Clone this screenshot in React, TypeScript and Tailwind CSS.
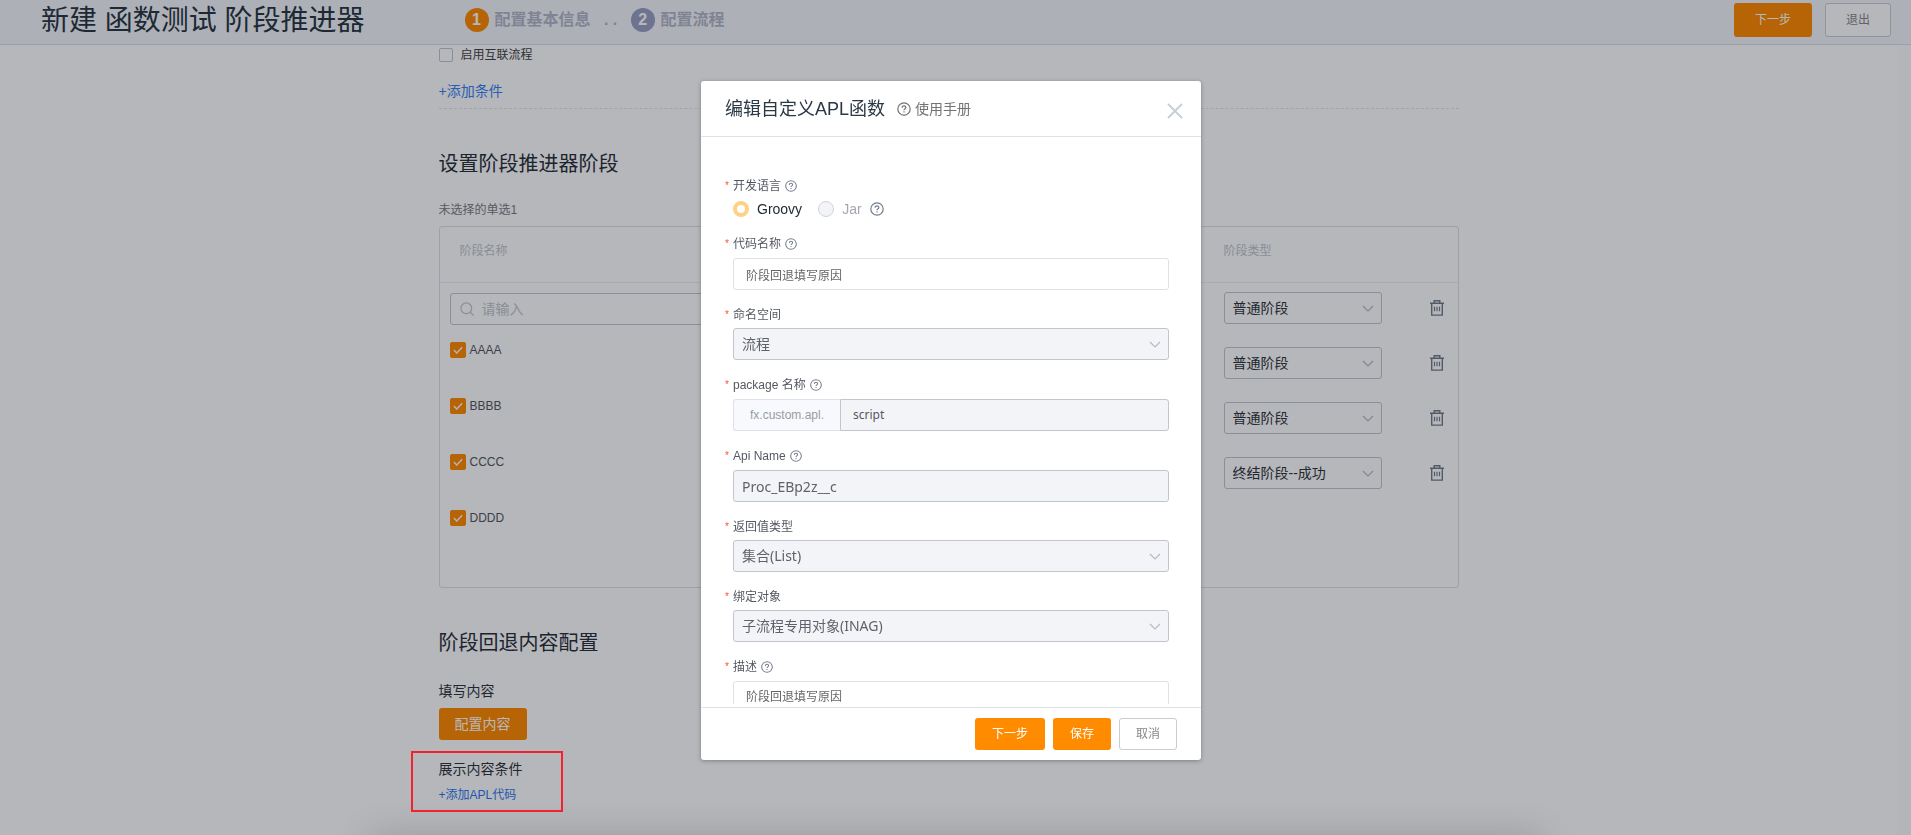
import { useState, type ReactNode } from 'react';

const stages = ['AAAA', 'BBBB', 'CCCC', 'DDDD'];
const stageTypes = ['普通阶段', '普通阶段', '普通阶段', '终结阶段--成功'];

const HelpIcon = ({ className }: { className: string }) => (
  <svg viewBox="0 0 14 14" fill="none" stroke="currentColor" strokeWidth="1.2" className={className} aria-hidden="true">
    <circle cx="7" cy="7" r="6.2" />
    <path d="M5.1 5.8c0-1.2.8-1.9 1.9-1.9s1.9.7 1.9 1.7c0 1.2-1.9 1.3-1.9 2.6M7 9.2v1.3" />
  </svg>
);

const Chevron = ({ className }: { className: string }) => (
  <svg viewBox="0 0 12 8" fill="none" stroke="currentColor" strokeWidth="1.2" className={className} aria-hidden="true">
    <path d="M1 2l5 5 5-5" />
  </svg>
);

const TrashIcon = () => (
  <svg viewBox="0 0 16 16" fill="none" stroke="currentColor" className="h-4 w-4" aria-hidden="true">
    <path strokeWidth="1.4" d="M1 3.2h14M2.7 3.2v11.9h10.6V3.2M5.2 3.2V.8h5.6v2.4" />
    <path strokeWidth="1.2" d="M5.5 6.8v4.4M8 6.8v4.4M10.5 6.8v4.4" />
  </svg>
);

interface FieldProps {
  id: string;
  label: string;
  help?: boolean;
  children: ReactNode;
}

const Field = ({ id, label, help, children }: FieldProps) => (
  <div>
    <div className={`mb-1 flex items-center text-xs text-[#545861] ${help ? 'h-[21px]' : 'h-5 pt-[2px]'}`}>
      <span className="w-2 text-[10px] text-[#ff522a]">*</span>
      <label htmlFor={id}>{label}</label>
      {help && <HelpIcon className="ml-1 h-3 w-3 text-[#737c8c]" />}
    </div>
    <div className="pl-2">{children}</div>
  </div>
);

const DisabledSelect = ({ id, value }: { id: string; value: string }) => (
  <div className="relative">
    <select
      id={id}
      disabled
      className="block h-8 w-full appearance-none rounded-[3px] border border-[#c1c5ce] bg-[#f2f4f7] pl-2 text-sm text-[#5f626b] disabled:opacity-100 font-['Noto_Sans','Noto_Sans_CJK_SC',sans-serif]"
    >
      <option>{value}</option>
    </select>
    <Chevron className="pointer-events-none absolute top-3 right-2 h-2 w-3 text-[#b5bac5]" />
  </div>
);

const StageRow = ({ name }: { name: string }) => {
  const [checked, setChecked] = useState(true);

  return (
    <label className="flex items-center text-xs text-[#545861]">
      <span className="relative h-4 w-4">
        <input
          type="checkbox"
          checked={checked}
          onChange={() => setChecked(!checked)}
          className="block h-4 w-4 appearance-none rounded-xs border border-[#c1c5ce] checked:border-[#ff8b00] checked:bg-[#ff8b00]"
        />
        <svg viewBox="0 0 16 16" fill="none" stroke="white" className="pointer-events-none absolute inset-0 h-4 w-4" aria-hidden="true">
          <path strokeWidth="1.3" d="M3.8 8l3 3 5.4-5.8" />
        </svg>
      </span>
      <span className="ml-1">{name}</span>
    </label>
  );
};

const StageTable = () => (
  <div className="mt-2 h-[362px] rounded-[3px] border border-[#dedfe3]">
    <div className="flex h-14 border-b border-[#eceef3] text-xs text-[#c1c5ce]">
      <div className="flex-1 pt-4 pl-5">阶段名称</div>
      <div className="w-[234px] pt-4">阶段类型</div>
    </div>
    <div className="flex">
      <div className="flex-1 pl-[10px] pt-[10px]">
        <label className="flex h-8 w-[400px] items-center rounded-[3px] border border-[#c1c5ce] pl-[9px] text-[#c1c5ce]">
          <svg viewBox="0 0 14 14" fill="none" stroke="currentColor" strokeWidth="1.2" className="h-[14px] w-[14px]" aria-hidden="true">
            <circle cx="6.3" cy="6.3" r="5.4" />
            <path d="M10.2 10.2l3.3 3.3" />
          </svg>
          <input
            aria-label="阶段名称"
            placeholder="请输入"
            className="ml-2 min-w-0 flex-1 text-sm outline-none placeholder:text-[#c1c5ce]"
          />
        </label>
        <div className="mt-[17px] flex flex-col gap-10">
          {stages.map((name) => (
            <StageRow key={name} name={name} />
          ))}
        </div>
      </div>
      <div className="flex w-[234px] flex-col gap-[23px] pt-[9px]">
        {stageTypes.map((type, i) => (
          <div key={i} className="flex items-center">
            <div className="relative w-[158px]">
              <select
                aria-label="阶段类型"
                className="block h-8 w-full appearance-none rounded-[3px] border border-[#c1c5ce] pl-2 text-sm text-[#2f3640]"
              >
                <option>{type}</option>
              </select>
              <Chevron className="pointer-events-none absolute top-3 right-2 h-2 w-3 text-[#b5bac5]" />
            </div>
            <button className="ml-[47px] text-[#737c8c]" aria-label="删除">
              <TrashIcon />
            </button>
          </div>
        ))}
      </div>
    </div>
  </div>
);

const Dialog = () => (
  <div className="fixed inset-0 z-10 flex justify-center bg-[rgba(2,8,16,0.29)] pt-[81px] pr-[9px] pb-[75px]">
    <div role="dialog" aria-labelledby="dialog-title" className="flex w-[500px] flex-col rounded-[3px] bg-white shadow-[0_1px_4px_rgba(0,0,0,0.3)]">
      <header className="flex h-14 shrink-0 items-center border-b border-[#dee1e8] pr-[18px] pl-6">
        <h2 id="dialog-title" className="text-lg text-[#2a3744]">编辑自定义APL函数</h2>
        <a href="#manual" className="ml-3 flex items-center gap-1 pt-px text-sm text-[#737373]">
          <HelpIcon className="h-[14px] w-[14px]" />
          使用手册
        </a>
        <button className="ml-auto pt-1 text-[#c6cedb]" aria-label="关闭">
          <svg viewBox="0 0 16 16" fill="none" stroke="currentColor" strokeWidth="1.9" className="h-4 w-4" aria-hidden="true">
            <path d="M1 1l14 14M15 1L1 15" />
          </svg>
        </button>
      </header>

      <form className="flex min-h-0 flex-1 flex-col gap-[14px] overflow-hidden pt-[38px] pr-8 pl-6">
        <Field id="lang-groovy" label="开发语言" help>
          <div className="flex h-[19px] items-center pb-[2px] text-sm">
            <input
              id="lang-groovy"
              type="radio"
              name="lang"
              defaultChecked
              className="h-4 w-4 appearance-none rounded-full border border-[#dee1e8] checked:border-4 checked:border-[#ffd088]"
            />
            <label htmlFor="lang-groovy" className="ml-2 text-[#212b36]">Groovy</label>
            <input
              id="lang-jar"
              type="radio"
              name="lang"
              disabled
              className="ml-4 h-4 w-4 appearance-none rounded-full border border-[#d0d4dc] bg-[#f2f4f7]"
            />
            <label htmlFor="lang-jar" className="ml-2 text-[#a3a8b3]">Jar</label>
            <HelpIcon className="ml-2 h-[14px] w-[14px] text-[#737c8c]" />
          </div>
        </Field>
        <Field id="code-name" label="代码名称" help>
          <input
            id="code-name"
            defaultValue="阶段回退填写原因"
            className="block h-8 w-full rounded-[3px] border border-[#dee1e8] px-3 text-xs text-[#666]"
          />
        </Field>
        <Field id="namespace" label="命名空间">
          <DisabledSelect id="namespace" value="流程" />
        </Field>
        <Field id="package" label="package 名称" help>
          <div className="flex h-8 text-xs">
            <span className="flex w-[107px] items-center justify-center rounded-l-[3px] border border-r-0 border-[#dee1e8] bg-[#f7f9fd] text-[#999ca3]">
              fx.custom.apl.
            </span>
            <input
              id="package"
              disabled
              defaultValue="script"
              className="min-w-0 flex-1 rounded-r-[3px] border border-[#c1c5ce] bg-[#f2f4f7] px-3 text-[#545861] font-['Noto_Sans',sans-serif]"
            />
          </div>
        </Field>
        <Field id="api-name" label="Api Name" help>
          <input
            id="api-name"
            disabled
            defaultValue="Proc_EBp2z__c"
            className="block h-8 w-full rounded-[3px] border border-[#c1c5ce] bg-[#f2f4f7] px-2 text-sm text-[#5f626b] font-['Noto_Sans',sans-serif]"
          />
        </Field>
        <Field id="return-type" label="返回值类型">
          <DisabledSelect id="return-type" value="集合(List)" />
        </Field>
        <Field id="bind-object" label="绑定对象">
          <DisabledSelect id="bind-object" value="子流程专用对象(INAG)" />
        </Field>
        <Field id="description" label="描述" help>
          <textarea
            id="description"
            defaultValue="阶段回退填写原因"
            className="block h-20 w-full resize-none rounded-[3px] border border-[#dee1e8] px-3 py-[7px] text-xs text-[#666]"
          />
        </Field>
      </form>

      <footer className="mt-[3px] flex shrink-0 justify-end gap-2 border-t border-[#dee1e8] pt-[10px] pr-6 pb-[10px] text-xs">
        <button className="h-8 w-[70px] rounded-[3px] bg-[#ff8b00] text-white">下一步</button>
        <button className="h-8 w-[58px] rounded-[3px] bg-[#ff8b00] text-white">保存</button>
        <button className="h-8 w-[58px] rounded-[3px] border border-[#ccc] text-[#888]">取消</button>
      </footer>
    </div>
  </div>
);

export default function App() {
  return (
    <div className="min-h-screen overflow-hidden bg-white font-['Liberation_Sans','Noto_Sans_CJK_SC',sans-serif]">
      {/* Top bar */}
      <header className="flex h-[45px] items-center border-b border-[#d6dfe8] bg-[#f3f6fb] pr-5 pb-1 pl-[41px]">
        <h1 className="pt-[2px] text-[28px] leading-9 text-[#2a3744]">新建 函数测试 阶段推进器</h1>
        <ol className="ml-[100px] flex items-center font-bold text-[#b4b6c8]">
          <li className="flex items-center gap-[6px]">
            <span className="flex h-6 w-6 items-center justify-center rounded-full bg-[#ff8b00] text-white">1</span>
            配置基本信息
          </li>
          <li className="w-10 text-center" aria-hidden="true">. .</li>
          <li className="flex items-center gap-[6px]">
            <span className="flex h-6 w-6 items-center justify-center rounded-full bg-[#9a9fc4] text-white">2</span>
            配置流程
          </li>
        </ol>
        <div className="ml-auto flex gap-[13px] text-xs">
          <button className="h-[34px] w-[78px] rounded-[3px] bg-[#ff8b00] text-white">下一步</button>
          <button className="h-[34px] w-[66px] rounded-[3px] border border-[#ccc] bg-white text-[#888]">退出</button>
        </div>
      </header>

      <div className="flex">
        <main className="min-w-0 flex-1">
          <div className="mx-auto w-[1020px]">
            <label className="flex h-5 items-center text-xs text-[#444]">
              <input type="checkbox" className="mr-2 h-[14px] w-[14px] appearance-none rounded-xs border border-[#c1c5ce]" />
              启用互联流程
            </label>
            <div className="mt-4 border-b border-dashed border-[#e4e4e6] pb-[7px]">
              <button className="block text-sm text-[#3582f8]">+添加条件</button>
            </div>

            <h2 className="mt-[41px] text-xl text-[#2a303b]">设置阶段推进器阶段</h2>
            <p className="mt-6 text-xs text-[#7a7d85]">未选择的单选1</p>
            <StageTable />

            <h2 className="mt-[41px] text-xl text-[#2a303b]">阶段回退内容配置</h2>
            <h3 className="mt-6 text-sm text-[#2f3640]">填写内容</h3>
            <button className="mt-[7px] block h-8 w-[88px] rounded-[3px] bg-[#ff8b00] text-sm text-white">配置内容</button>
            <div className="relative mt-4">
              <h3 className="pt-[3px] text-sm text-[#2f3640]">展示内容条件</h3>
              <button className="mt-2 block text-xs text-[#2a78f0]">+添加APL代码</button>
              <div className="pointer-events-none absolute -top-[5px] -left-7 z-20 h-[61px] w-[152px] border-2 border-[#f5222d]" />
            </div>
          </div>
        </main>
        <div className="min-h-[790px] w-[14px] bg-[#fcfcfc]" />
      </div>

      {/* Soft shade along the bottom edge */}
      <div className="pointer-events-none fixed inset-x-[370px] top-full z-20 h-10 shadow-[0_0_36px_rgba(0,0,0,0.16)]" />

      <Dialog />
    </div>
  );
}
